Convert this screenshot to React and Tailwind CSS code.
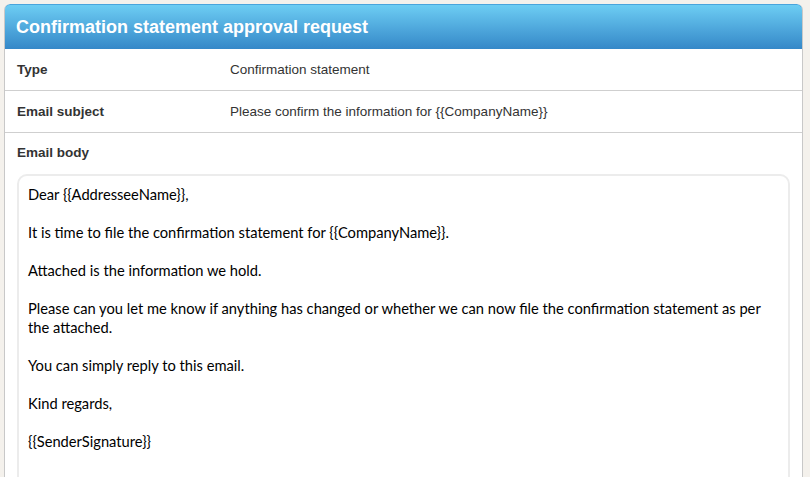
export default function App() {
  const rows = [
    { label: "Type", value: "Confirmation statement" },
    { label: "Email subject", value: "Please confirm the information for {{CompanyName}}" },
  ];

  return (
    <div className="min-h-screen bg-[#f4f1ec] pt-[4px] pl-[4px] pr-[7px] font-['Liberation_Sans',Arial,sans-serif]">
      <div className="bg-white border-x border-[#c8c8c8] rounded-t-[6px] h-[473px] overflow-hidden">
        <div className="h-[45px] -mx-px rounded-t-[6px] bg-gradient-to-b from-[#6dcdf3] to-[#3588c8] border border-b-0 border-[#4aa4dc] flex items-center px-[11px]">
          <h1 className="text-white font-bold text-[18px] leading-none">Confirmation statement approval request</h1>
        </div>

        {rows.map((r) => (
          <div key={r.label} className="flex items-center h-[42px] pt-[1px] border-b border-[#cfcfcf] text-[13.5px] text-[#333]">
            <div className="w-[225px] pl-[12px] font-bold">{r.label}</div>
            <div>{r.value}</div>
          </div>
        ))}

        <div className="px-[12px]">
          <div className="pt-[12px] pb-[14px] text-[13.5px] font-bold text-[#333] leading-[15px]">Email body</div>
          <div className="border-2 border-[#ececec] rounded-[10px] px-[9px] pt-[9px] pb-[40px] font-['Lato',sans-serif] text-[14.7px] leading-[19px] text-black space-y-[19px]">
            <p>Dear {"{{AddresseeName}}"},</p>
            <p>It is time to file the confirmation statement for {"{{CompanyName}}"}.</p>
            <p>Attached is the information we hold.</p>
            <p>
              Please can you let me know if anything has changed or whether we can now file the confirmation statement as per
              <br />
              the attached.
            </p>
            <p>You can simply reply to this email.</p>
            <p>Kind regards,</p>
            <p>{"{{SenderSignature}}"}</p>
          </div>
        </div>
      </div>
    </div>
  );
}
